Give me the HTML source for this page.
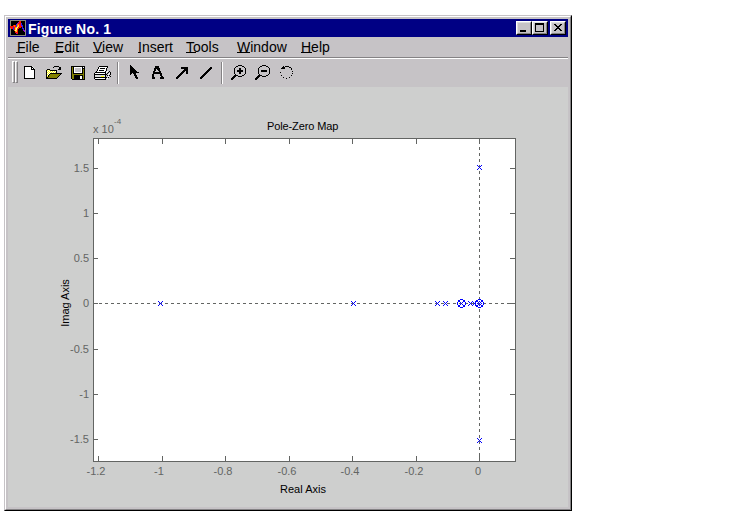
<!DOCTYPE html>
<html><head><meta charset="utf-8">
<style>
html,body{margin:0;padding:0;background:#fff;width:750px;height:513px;overflow:hidden;position:relative}
*{box-sizing:border-box}
.abs{position:absolute}
body{font-family:"Liberation Sans",sans-serif}
#win{position:absolute;left:4px;top:15px;width:568px;height:496px;background:#c6c3c6;
 border-top:1px solid #c6c3c6;border-left:1px solid #c6c3c6;border-right:1px solid #000;border-bottom:1px solid #000}
#win2{position:absolute;left:0;top:0;right:0;bottom:0;border-top:1px solid #fff;border-left:1px solid #fff;border-right:1px solid #848284;border-bottom:1px solid #848284}
#title{position:absolute;left:8px;top:19px;width:560px;height:18px;background:#000084}
#ttext{position:absolute;left:28px;top:19px;letter-spacing:0.2px;color:#fff;font-weight:bold;font-size:14px;line-height:20px;white-space:nowrap}
.btn{position:absolute;top:21px;width:16px;height:14px;background:#c6c3c6;border-top:1px solid #fff;border-left:1px solid #fff;border-right:1px solid #000;border-bottom:1px solid #000}
.btn i{position:absolute;left:0;top:0;right:0;bottom:0;border-right:1px solid #848284;border-bottom:1px solid #848284;border-top:1px solid #dedfde;border-left:1px solid #dedfde}
.menu{position:absolute;top:38px;font-size:14px;line-height:18px;color:#000;white-space:nowrap}
.ul{position:absolute;top:52px;height:1px;background:#000}
#fig{position:absolute;left:8px;top:87px;width:560px;height:420px;background:#cecfce}
</style></head><body>
<div id="win"><div id="win2"></div></div>
<div id="title"></div>
<svg class="abs" style="left:10px;top:20px" width="16" height="16" viewBox="0 0 16 16" shape-rendering="crispEdges"><path fill="#8c8a80" d="M0 0h16v1h-16zM0 1h1v1h-1zM15 1h1v1h-1zM0 2h1v1h-1zM15 2h1v1h-1zM0 3h1v1h-1zM15 3h1v1h-1zM0 4h1v1h-1zM15 4h1v1h-1zM0 5h1v1h-1zM15 5h1v1h-1zM15 6h1v1h-1zM15 7h1v1h-1zM0 8h1v1h-1zM15 8h1v1h-1zM0 9h1v1h-1zM15 9h1v1h-1zM0 10h1v1h-1zM15 10h1v1h-1zM0 11h1v1h-1zM15 11h1v1h-1zM0 12h1v1h-1zM15 12h1v1h-1zM0 13h1v1h-1zM15 13h1v1h-1zM0 14h1v1h-1zM15 14h1v1h-1zM0 15h16v1h-16z"/><path fill="#000000" d="M1 1h8v1h-8zM11 1h4v1h-4zM1 2h7v1h-7zM11 2h4v1h-4zM1 3h6v1h-6zM12 3h3v1h-3zM1 4h5v1h-5zM12 4h3v1h-3zM1 5h2v1h-2zM13 5h2v1h-2zM13 6h2v1h-2zM11 7h1v1h-1zM13 7h2v1h-2zM9 8h3v1h-3zM14 8h1v1h-1zM1 9h2v1h-2zM8 9h5v1h-5zM14 9h1v1h-1zM1 10h3v1h-3zM8 10h5v1h-5zM1 11h4v1h-4zM8 11h6v1h-6zM1 12h4v1h-4zM8 12h7v1h-7zM1 13h5v1h-5zM8 13h7v1h-7zM1 14h14v1h-14z"/><path fill="#ff1000" d="M9 1h2v1h-2zM9 2h2v1h-2zM8 3h3v1h-3zM9 4h2v1h-2zM3 5h1v1h-1zM5 5h1v1h-1zM9 5h2v1h-2zM0 6h4v1h-4zM5 6h1v1h-1zM9 6h3v1h-3zM0 7h3v1h-3zM4 7h1v1h-1zM8 7h3v1h-3zM1 8h2v1h-2zM4 8h1v1h-1zM8 8h1v1h-1zM4 9h1v1h-1zM7 9h1v1h-1zM7 10h1v1h-1zM7 11h1v1h-1zM5 12h3v1h-3zM7 13h1v1h-1z"/><path fill="#ff7000" d="M7 4h2v1h-2zM4 5h1v1h-1zM7 5h1v1h-1zM4 6h1v1h-1zM5 7h1v1h-1zM7 8h1v1h-1zM4 10h1v1h-1zM5 11h1v1h-1z"/><path fill="#ffd020" d="M8 5h1v1h-1zM7 6h2v1h-2zM6 7h1v1h-1zM5 8h1v1h-1zM5 9h1v1h-1zM6 10h1v1h-1zM6 11h1v1h-1z"/><path fill="#ffff80" d="M7 7h1v1h-1zM6 8h1v1h-1zM6 9h1v1h-1zM5 10h1v1h-1z"/><path fill="#3018ff" d="M11 3h1v1h-1zM6 4h1v1h-1zM11 4h1v1h-1zM6 5h1v1h-1zM11 5h2v1h-2zM6 6h1v1h-1zM12 6h1v1h-1zM3 7h1v1h-1zM12 7h1v1h-1zM3 8h1v1h-1zM12 8h2v1h-2zM3 9h1v1h-1zM13 9h1v1h-1z"/><path fill="#9010d0" d="M8 2h1v1h-1zM7 3h1v1h-1zM13 10h2v1h-2zM14 11h1v1h-1zM6 13h1v1h-1z"/></svg>
<div id="ttext">Figure No. 1</div>
<div class="btn" style="left:516px"><i></i></div>
<div class="btn" style="left:532px"><i></i></div>
<div class="btn" style="left:550px"><i></i></div>
<div class="abs" style="left:520px;top:30px;width:6px;height:2px;background:#000"></div>
<div class="abs" style="left:535px;top:23px;width:9px;height:9px;border:1px solid #000;border-top-width:2px"></div>
<svg class="abs" style="left:0;top:0" width="600" height="40" shape-rendering="crispEdges"><path fill="#000" d="M554 24h1v1h-1zM555 24h1v1h-1zM560 24h1v1h-1zM561 24h1v1h-1zM555 25h1v1h-1zM556 25h1v1h-1zM559 25h1v1h-1zM560 25h1v1h-1zM556 26h1v1h-1zM557 26h1v1h-1zM558 26h1v1h-1zM559 26h1v1h-1zM557 27h1v1h-1zM558 27h1v1h-1zM556 28h1v1h-1zM557 28h1v1h-1zM558 28h1v1h-1zM559 28h1v1h-1zM555 29h1v1h-1zM556 29h1v1h-1zM559 29h1v1h-1zM560 29h1v1h-1zM554 30h1v1h-1zM555 30h1v1h-1zM560 30h1v1h-1zM561 30h1v1h-1z"/></svg>

<div class="menu" style="left:17px">File</div>
<div class="menu" style="left:55px">Edit</div>
<div class="menu" style="left:93px">View</div>
<div class="menu" style="left:138px">Insert</div>
<div class="menu" style="left:186px">Tools</div>
<div class="menu" style="left:237px">Window</div>
<div class="menu" style="left:301px">Help</div>
<div class="ul" style="left:16px;width:9px"></div>
<div class="ul" style="left:54px;width:9px"></div>
<div class="ul" style="left:93px;width:10px"></div>
<div class="ul" style="left:138px;width:3px"></div>
<div class="ul" style="left:186px;width:10px"></div>
<div class="ul" style="left:237px;width:13px"></div>
<div class="ul" style="left:301px;width:11px"></div>

<div class="abs" style="left:8px;top:57px;width:560px;height:1px;background:#848284"></div>
<div class="abs" style="left:8px;top:58px;width:560px;height:1px;background:#fff"></div>

<!-- toolbar grip -->
<div class="abs" style="left:12px;top:61px;width:3px;height:22px;border-top:1px solid #fff;border-left:1px solid #fff;border-right:1px solid #848284;border-bottom:1px solid #848284"></div>
<div class="abs" style="left:15px;top:61px;width:3px;height:22px;border-top:1px solid #fff;border-left:1px solid #fff;border-right:1px solid #848284;border-bottom:1px solid #848284"></div>
<!-- separators -->
<div class="abs" style="left:117px;top:62px;width:1px;height:22px;background:#848284"></div>
<div class="abs" style="left:118px;top:62px;width:1px;height:22px;background:#fff"></div>
<div class="abs" style="left:221px;top:62px;width:1px;height:22px;background:#848284"></div>
<div class="abs" style="left:222px;top:62px;width:1px;height:22px;background:#fff"></div>

<svg class="abs" style="left:0;top:58px" width="320" height="28" viewBox="0 58 320 28" shape-rendering="crispEdges">
<path fill="#000000" d="M24 66h8v1h-8zM24 67h1v1h-1zM31 67h2v1h-2zM24 68h1v1h-1zM31 68h1v1h-1zM33 68h1v1h-1zM24 69h1v1h-1zM31 69h4v1h-4zM24 70h1v1h-1zM34 70h1v1h-1zM24 71h1v1h-1zM34 71h1v1h-1zM24 72h1v1h-1zM34 72h1v1h-1zM24 73h1v1h-1zM34 73h1v1h-1zM24 74h1v1h-1zM34 74h1v1h-1zM24 75h1v1h-1zM34 75h1v1h-1zM24 76h1v1h-1zM34 76h1v1h-1zM24 77h1v1h-1zM34 77h1v1h-1zM24 78h11v1h-11zM54 66h5v1h-5zM53 67h1v1h-1zM59 67h2v1h-2zM59 68h2v1h-2zM47 69h3v1h-3zM58 69h3v1h-3zM46 70h1v1h-1zM50 70h7v1h-7zM46 71h1v1h-1zM56 71h1v1h-1zM46 72h1v1h-1zM56 72h1v1h-1zM46 73h1v1h-1zM50 73h12v1h-12zM46 74h1v1h-1zM49 74h1v1h-1zM60 74h1v1h-1zM46 75h1v1h-1zM48 75h1v1h-1zM59 75h1v1h-1zM46 76h1v1h-1zM48 76h1v1h-1zM58 76h1v1h-1zM46 77h2v1h-2zM57 77h1v1h-1zM46 78h11v1h-11zM71 66h14v1h-14zM71 67h1v1h-1zM73 67h1v1h-1zM82 67h1v1h-1zM84 67h1v1h-1zM71 68h1v1h-1zM73 68h1v1h-1zM82 68h3v1h-3zM71 69h1v1h-1zM73 69h1v1h-1zM82 69h1v1h-1zM84 69h1v1h-1zM71 70h1v1h-1zM73 70h1v1h-1zM82 70h1v1h-1zM84 70h1v1h-1zM71 71h1v1h-1zM73 71h1v1h-1zM82 71h1v1h-1zM84 71h1v1h-1zM71 72h1v1h-1zM73 72h1v1h-1zM82 72h1v1h-1zM84 72h1v1h-1zM71 73h1v1h-1zM73 73h10v1h-10zM84 73h1v1h-1zM71 74h1v1h-1zM84 74h1v1h-1zM71 75h1v1h-1zM74 75h9v1h-9zM84 75h1v1h-1zM71 76h1v1h-1zM74 76h6v1h-6zM82 76h1v1h-1zM84 76h1v1h-1zM71 77h1v1h-1zM74 77h6v1h-6zM82 77h1v1h-1zM84 77h1v1h-1zM71 78h1v1h-1zM74 78h6v1h-6zM82 78h1v1h-1zM84 78h1v1h-1zM72 79h13v1h-13zM99 66h9v1h-9zM98 67h1v1h-1zM107 67h1v1h-1zM98 68h1v1h-1zM100 68h5v1h-5zM106 68h1v1h-1zM97 69h1v1h-1zM106 69h1v1h-1zM97 70h1v1h-1zM99 70h5v1h-5zM106 70h1v1h-1zM96 71h1v1h-1zM105 71h1v1h-1zM109 71h1v1h-1zM95 72h11v1h-11zM108 72h1v1h-1zM110 72h1v1h-1zM94 73h1v1h-1zM105 73h1v1h-1zM107 73h1v1h-1zM110 73h1v1h-1zM94 74h13v1h-13zM110 74h1v1h-1zM94 75h1v1h-1zM105 75h1v1h-1zM107 75h1v1h-1zM109 75h1v1h-1zM94 76h1v1h-1zM105 76h1v1h-1zM110 76h1v1h-1zM94 77h13v1h-13zM108 77h1v1h-1zM94 78h1v1h-1zM105 78h1v1h-1zM95 79h11v1h-11zM130 65h1v1h-1zM130 66h2v1h-2zM130 67h3v1h-3zM130 68h4v1h-4zM130 69h5v1h-5zM130 70h6v1h-6zM130 71h7v1h-7zM130 72h9v1h-9zM130 73h2v1h-2zM133 73h3v1h-3zM130 74h1v1h-1zM134 74h2v1h-2zM134 75h3v1h-3zM135 76h2v1h-2zM135 77h3v1h-3zM136 78h2v1h-2zM155 66h4v1h-4zM155 67h4v1h-4zM154 68h6v1h-6zM154 69h2v1h-2zM157 69h3v1h-3zM154 70h2v1h-2zM158 70h2v1h-2zM153 71h2v1h-2zM159 71h2v1h-2zM153 72h8v1h-8zM153 73h9v1h-9zM152 74h2v1h-2zM160 74h2v1h-2zM152 75h2v1h-2zM160 75h2v1h-2zM152 76h2v1h-2zM161 76h2v1h-2zM152 77h3v1h-3zM160 77h4v1h-4zM152 78h3v1h-3zM160 78h4v1h-4zM181 67h7v1h-7zM181 68h7v1h-7zM184 69h4v1h-4zM183 70h5v1h-5zM182 71h3v1h-3zM186 71h2v1h-2zM181 72h3v1h-3zM186 72h2v1h-2zM180 73h3v1h-3zM186 73h2v1h-2zM179 74h3v1h-3zM178 75h3v1h-3zM177 76h3v1h-3zM176 77h3v1h-3zM176 78h2v1h-2zM210 67h2v1h-2zM209 68h3v1h-3zM208 69h3v1h-3zM207 70h3v1h-3zM206 71h3v1h-3zM205 72h3v1h-3zM204 73h3v1h-3zM203 74h3v1h-3zM202 75h3v1h-3zM201 76h3v1h-3zM200 77h3v1h-3zM200 78h2v1h-2zM238 65h4v1h-4zM236 66h2v1h-2zM242 66h2v1h-2zM235 67h1v1h-1zM244 67h1v1h-1zM234 68h1v1h-1zM239 68h2v1h-2zM245 68h1v1h-1zM234 69h1v1h-1zM239 69h2v1h-2zM245 69h1v1h-1zM234 70h1v1h-1zM237 70h6v1h-6zM245 70h1v1h-1zM234 71h1v1h-1zM237 71h6v1h-6zM245 71h1v1h-1zM234 72h1v1h-1zM239 72h2v1h-2zM245 72h1v1h-1zM234 73h1v1h-1zM239 73h2v1h-2zM245 73h1v1h-1zM235 74h1v1h-1zM244 74h1v1h-1zM234 75h4v1h-4zM242 75h2v1h-2zM233 76h3v1h-3zM238 76h4v1h-4zM232 77h3v1h-3zM231 78h3v1h-3zM231 79h2v1h-2zM262 65h4v1h-4zM260 66h2v1h-2zM266 66h2v1h-2zM259 67h1v1h-1zM268 67h1v1h-1zM258 68h1v1h-1zM269 68h1v1h-1zM258 69h1v1h-1zM269 69h1v1h-1zM258 70h1v1h-1zM261 70h6v1h-6zM269 70h1v1h-1zM258 71h1v1h-1zM261 71h6v1h-6zM269 71h1v1h-1zM258 72h1v1h-1zM269 72h1v1h-1zM258 73h1v1h-1zM269 73h1v1h-1zM259 74h1v1h-1zM268 74h1v1h-1zM258 75h4v1h-4zM266 75h2v1h-2zM257 76h3v1h-3zM262 76h4v1h-4zM256 77h3v1h-3zM255 78h3v1h-3zM255 79h2v1h-2zM283 66h1v1h-1zM285 66h4v1h-4zM282 67h3v1h-3zM289 67h2v1h-2zM281 68h4v1h-4zM291 68h1v1h-1zM291 69h1v1h-1zM292 71h1v1h-1zM280 72h1v1h-1zM292 73h1v1h-1zM281 75h1v1h-1zM291 75h1v1h-1zM283 77h1v1h-1zM289 77h1v1h-1zM286 78h1v1h-1z"/>
<path fill="#ffffff" d="M25 67h6v1h-6zM25 68h6v1h-6zM32 68h1v1h-1zM25 69h6v1h-6zM25 70h9v1h-9zM25 71h9v1h-9zM25 72h9v1h-9zM25 73h9v1h-9zM25 74h9v1h-9zM25 75h9v1h-9zM25 76h9v1h-9zM25 77h9v1h-9zM48 70h1v1h-1zM47 71h1v1h-1zM49 71h1v1h-1zM51 71h1v1h-1zM53 71h1v1h-1zM55 71h1v1h-1zM48 72h1v1h-1zM50 72h1v1h-1zM52 72h1v1h-1zM54 72h1v1h-1zM47 73h1v1h-1zM49 73h1v1h-1zM48 74h1v1h-1zM47 75h1v1h-1zM74 67h8v1h-8zM83 67h1v1h-1zM74 68h1v1h-1zM81 68h1v1h-1zM74 69h1v1h-1zM81 69h1v1h-1zM74 70h1v1h-1zM81 70h1v1h-1zM74 71h1v1h-1zM81 71h1v1h-1zM74 72h8v1h-8zM80 76h2v1h-2zM80 77h2v1h-2zM80 78h2v1h-2zM99 67h8v1h-8zM99 68h1v1h-1zM105 68h1v1h-1zM98 69h8v1h-8zM98 70h1v1h-1zM104 70h2v1h-2zM97 71h8v1h-8zM107 71h1v1h-1zM106 72h1v1h-1zM95 73h10v1h-10zM109 73h1v1h-1zM108 74h1v1h-1zM108 76h1v1h-1zM95 78h10v1h-10zM107 78h1v1h-1z"/>
<path fill="#ffff00" d="M47 70h1v1h-1zM49 70h1v1h-1zM48 71h1v1h-1zM50 71h1v1h-1zM52 71h1v1h-1zM54 71h1v1h-1zM47 72h1v1h-1zM49 72h1v1h-1zM51 72h1v1h-1zM53 72h1v1h-1zM55 72h1v1h-1zM48 73h1v1h-1zM47 74h1v1h-1zM47 76h1v1h-1zM101 76h3v1h-3z"/>
<path fill="#848200" d="M50 74h10v1h-10zM49 75h10v1h-10zM49 76h9v1h-9zM48 77h9v1h-9zM72 67h1v1h-1zM72 68h1v1h-1zM72 69h1v1h-1zM83 69h1v1h-1zM72 70h1v1h-1zM83 70h1v1h-1zM72 71h1v1h-1zM83 71h1v1h-1zM72 72h1v1h-1zM83 72h1v1h-1zM72 73h1v1h-1zM83 73h1v1h-1zM72 74h12v1h-12zM72 75h2v1h-2zM83 75h1v1h-1zM72 76h2v1h-2zM83 76h1v1h-1zM72 77h2v1h-2zM83 77h1v1h-1zM72 78h2v1h-2zM83 78h1v1h-1z"/>
<path fill="#c6c3c6" d="M75 68h6v1h-6zM75 69h6v1h-6zM75 70h6v1h-6zM75 71h6v1h-6z"/>
<path fill="#dedfde" d="M32 66h1v1h-1zM33 67h1v1h-1zM34 68h1v1h-1zM71 79h1v1h-1zM95 75h10v1h-10zM95 76h6v1h-6zM104 76h1v1h-1z"/>
</svg>

<div id="fig"></div>

<svg class="abs" style="left:0;top:0" width="750" height="513" viewBox="0 0 750 513" shape-rendering="crispEdges">
 <rect x="93" y="138" width="423" height="324" fill="#fff"/>
 <g stroke="#636563" stroke-width="1" fill="none">
  <rect x="93.5" y="138.5" width="422" height="323"/>
  <line x1="98.5" y1="139" x2="98.5" y2="144"/><line x1="98.5" y1="456" x2="98.5" y2="461"/><line x1="162.5" y1="139" x2="162.5" y2="144"/><line x1="162.5" y1="456" x2="162.5" y2="461"/><line x1="225.5" y1="139" x2="225.5" y2="144"/><line x1="225.5" y1="456" x2="225.5" y2="461"/><line x1="289.5" y1="139" x2="289.5" y2="144"/><line x1="289.5" y1="456" x2="289.5" y2="461"/><line x1="352.5" y1="139" x2="352.5" y2="144"/><line x1="352.5" y1="456" x2="352.5" y2="461"/><line x1="416.5" y1="139" x2="416.5" y2="144"/><line x1="416.5" y1="456" x2="416.5" y2="461"/><line x1="479.5" y1="139" x2="479.5" y2="144"/><line x1="479.5" y1="456" x2="479.5" y2="461"/><line x1="94" y1="168.5" x2="98" y2="168.5"/><line x1="510" y1="168.5" x2="515" y2="168.5"/><line x1="94" y1="213.5" x2="98" y2="213.5"/><line x1="510" y1="213.5" x2="515" y2="213.5"/><line x1="94" y1="258.5" x2="98" y2="258.5"/><line x1="510" y1="258.5" x2="515" y2="258.5"/><line x1="94" y1="303.5" x2="98" y2="303.5"/><line x1="510" y1="303.5" x2="515" y2="303.5"/><line x1="94" y1="349.5" x2="98" y2="349.5"/><line x1="510" y1="349.5" x2="515" y2="349.5"/><line x1="94" y1="394.5" x2="98" y2="394.5"/><line x1="510" y1="394.5" x2="515" y2="394.5"/><line x1="94" y1="439.5" x2="98" y2="439.5"/><line x1="510" y1="439.5" x2="515" y2="439.5"/>
  <line x1="93" y1="303.5" x2="515" y2="303.5" stroke-dasharray="3 3"/>
  <line x1="479.5" y1="141" x2="479.5" y2="461" stroke-dasharray="3 3"/>
 </g>
 <g fill="#636563" font-family="Liberation Sans" font-size="11" text-anchor="middle">
  <text x="96" y="475">-1.2</text>
  <text x="159" y="475">-1</text>
  <text x="223" y="475">-0.8</text>
  <text x="287" y="475">-0.6</text>
  <text x="350" y="475">-0.4</text>
  <text x="414" y="475">-0.2</text>
  <text x="478" y="475">0</text>
 </g>
 <g fill="#636563" font-family="Liberation Sans" font-size="11" text-anchor="end">
  <text x="89" y="172">1.5</text>
  <text x="89" y="217">1</text>
  <text x="89" y="262">0.5</text>
  <text x="89" y="307">0</text>
  <text x="89" y="353">-0.5</text>
  <text x="89" y="398">-1</text>
  <text x="89" y="443">-1.5</text>
 </g>
 <g fill="#636563" font-family="Liberation Sans" font-size="11">
  <text x="93" y="133">x 10</text>
  <text x="114" y="124" font-size="8">-4</text>
 </g>
 <g fill="#000" font-family="Liberation Sans" font-size="11">
  <text x="302.6" y="130" text-anchor="middle" letter-spacing="-0.12">Pole-Zero Map</text>
  <text x="303" y="493" text-anchor="middle">Real Axis</text>
  <text transform="translate(69 303) rotate(-90)" text-anchor="middle">Imag Axis</text>
 </g>
 <path fill="#0000ff" d="M158 301h1v1h-1zM158 305h1v1h-1zM159 302h1v1h-1zM159 304h1v1h-1zM160 303h1v1h-1zM161 302h1v1h-1zM161 304h1v1h-1zM162 301h1v1h-1zM162 305h1v1h-1zM351 301h1v1h-1zM351 305h1v1h-1zM352 302h1v1h-1zM352 304h1v1h-1zM353 303h1v1h-1zM354 302h1v1h-1zM354 304h1v1h-1zM355 301h1v1h-1zM355 305h1v1h-1zM435 301h1v1h-1zM435 305h1v1h-1zM436 302h1v1h-1zM436 304h1v1h-1zM437 303h1v1h-1zM438 302h1v1h-1zM438 304h1v1h-1zM439 301h1v1h-1zM439 305h1v1h-1zM443 301h1v1h-1zM443 305h1v1h-1zM444 302h1v1h-1zM444 304h1v1h-1zM445 303h1v1h-1zM446 302h1v1h-1zM446 304h1v1h-1zM447 301h1v1h-1zM447 305h1v1h-1zM457 302h1v1h-1zM457 303h1v1h-1zM457 304h1v1h-1zM458 300h1v1h-1zM458 301h1v1h-1zM458 305h1v1h-1zM458 306h1v1h-1zM459 300h1v1h-1zM459 301h1v1h-1zM459 305h1v1h-1zM459 306h1v1h-1zM460 299h1v1h-1zM460 302h1v1h-1zM460 304h1v1h-1zM460 307h1v1h-1zM461 299h1v1h-1zM461 303h1v1h-1zM461 307h1v1h-1zM462 299h1v1h-1zM462 302h1v1h-1zM462 304h1v1h-1zM462 307h1v1h-1zM463 300h1v1h-1zM463 301h1v1h-1zM463 305h1v1h-1zM463 306h1v1h-1zM464 300h1v1h-1zM464 301h1v1h-1zM464 305h1v1h-1zM464 306h1v1h-1zM465 302h1v1h-1zM465 303h1v1h-1zM465 304h1v1h-1zM468 301h1v1h-1zM468 305h1v1h-1zM469 302h1v1h-1zM469 304h1v1h-1zM470 303h1v1h-1zM471 302h1v1h-1zM471 304h1v1h-1zM472 301h1v1h-1zM472 305h1v1h-1zM473 302h1v1h-1zM473 304h1v1h-1zM474 303h1v1h-1zM475 301h1v1h-1zM475 302h1v1h-1zM475 303h1v1h-1zM475 304h1v1h-1zM475 305h1v1h-1zM476 300h1v1h-1zM476 301h1v1h-1zM476 305h1v1h-1zM476 306h1v1h-1zM477 165h1v1h-1zM477 169h1v1h-1zM477 300h1v1h-1zM477 301h1v1h-1zM477 303h1v1h-1zM477 305h1v1h-1zM477 306h1v1h-1zM477 438h1v1h-1zM477 442h1v1h-1zM478 166h1v1h-1zM478 168h1v1h-1zM478 299h1v1h-1zM478 302h1v1h-1zM478 304h1v1h-1zM478 307h1v1h-1zM478 439h1v1h-1zM478 441h1v1h-1zM479 167h1v1h-1zM479 299h1v1h-1zM479 301h1v1h-1zM479 303h1v1h-1zM479 305h1v1h-1zM479 307h1v1h-1zM479 440h1v1h-1zM480 166h1v1h-1zM480 168h1v1h-1zM480 299h1v1h-1zM480 302h1v1h-1zM480 304h1v1h-1zM480 307h1v1h-1zM480 439h1v1h-1zM480 441h1v1h-1zM481 165h1v1h-1zM481 169h1v1h-1zM481 300h1v1h-1zM481 301h1v1h-1zM481 303h1v1h-1zM481 305h1v1h-1zM481 306h1v1h-1zM481 438h1v1h-1zM481 442h1v1h-1zM482 300h1v1h-1zM482 301h1v1h-1zM482 305h1v1h-1zM482 306h1v1h-1zM483 302h1v1h-1zM483 303h1v1h-1zM483 304h1v1h-1z"/>
</svg>
</body></html>
